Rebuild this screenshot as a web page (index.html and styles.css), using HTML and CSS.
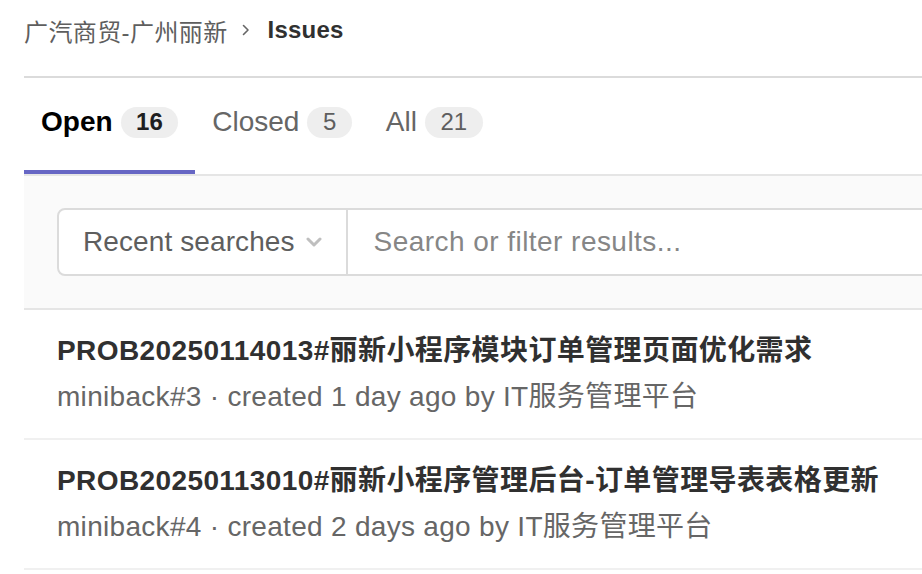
FILE: index.html
```html
<!DOCTYPE html>
<html lang="zh-CN">
<head>
<meta charset="utf-8">
<link rel="stylesheet" href="styles.css">
</head>
<body>
<div class="page">
  <nav class="breadcrumb">
    <span class="crumb">广汽商贸-广州丽新</span>
    <svg class="crumb-sep" width="8" height="12" viewBox="0 0 8 12"><path d="M1.5 1.5 L6 6 L1.5 10.5" fill="none" stroke="#666" stroke-width="1.6" stroke-linecap="round" stroke-linejoin="round"/></svg>
    <span class="crumb-current">Issues</span>
  </nav>
  <div class="tabs">
    <div class="tab active"><span class="tab-label">Open</span><span class="badge">16</span></div>
    <div class="tab"><span class="tab-label">Closed</span><span class="badge">5</span></div>
    <div class="tab"><span class="tab-label">All</span><span class="badge">21</span></div>
  </div>
  <div class="filter-bar">
    <div class="search-box">
      <div class="recent">
        <span>Recent searches</span>
        <svg class="chev" width="16" height="10" viewBox="0 0 16 10"><path d="M2 2 L8 8 L14 2" fill="none" stroke="#bfbfbf" stroke-width="3" stroke-linecap="round" stroke-linejoin="round"/></svg>
      </div>
      <div class="search-input">Search or filter results...</div>
    </div>
  </div>
  <ul class="issues">
    <li class="issue">
      <div class="issue-title">PROB20250114013#丽新小程序模块订单管理页面优化需求</div>
      <div class="issue-meta">miniback#3 · created 1 day ago by IT服务管理平台</div>
    </li>
    <li class="issue">
      <div class="issue-title">PROB20250113010#丽新小程序管理后台-订单管理导表表格更新</div>
      <div class="issue-meta">miniback#4 · created 2 days ago by IT服务管理平台</div>
    </li>
  </ul>
</div>
</body>
</html>
```

FILE: styles.css
```css
html, body {
  margin: 0;
  padding: 0;
  background: #ffffff;
  overflow: hidden;
}
body {
  font-family: "Liberation Sans", "Noto Sans CJK SC", sans-serif;
  color: #303030;
  letter-spacing: 0.3px;
}
.page {
  padding-left: 24px;
}
.breadcrumb {
  display: flex;
  align-items: center;
  box-sizing: content-box;
  height: 60px;
  padding-bottom: 16px;
  border-bottom: 2px solid #dbdbdb;
  font-size: 24px;
}
.crumb {
  color: #5e5e5e;
  letter-spacing: 0.4px;
}
.crumb-sep {
  margin: 0 18px 0 14px;
}
.crumb-current {
  font-weight: bold;
  color: #303030;
  letter-spacing: 0.2px;
}
.tabs {
  display: flex;
  border-bottom: 2px solid #e5e5e5;
}
.tab {
  display: flex;
  align-items: center;
  gap: 8px;
  height: 96px;
  padding: 0 17px 8px;
  box-sizing: border-box;
  font-size: 28px;
  color: #666666;
  letter-spacing: 0;
}
.tab.active {
  color: #000000;
  font-weight: bold;
  box-shadow: inset 0 -4px 0 #6666c4;
}
.badge {
  display: inline-flex;
  align-items: center;
  justify-content: center;
  height: 31px;
  padding: 0 15.5px;
  border-radius: 16px;
  background: #eeeeee;
  font-size: 24px;
  color: #5e5e5e;
  font-weight: normal;
}
.tab.active .badge {
  color: #1f1f1f;
  font-weight: bold;
}
.filter-bar {
  background: #fafafa;
  padding: 32px 0 32px 33px;
  border-bottom: 2px solid #e5e5e5;
}
.search-box {
  display: flex;
  height: 64px;
  background: #ffffff;
  border: 2px solid #dbdbdb;
  border-radius: 8px;
  margin-right: -40px;
}
.recent {
  display: flex;
  align-items: center;
  gap: 11px;
  padding: 0 24px;
  border-right: 2px solid #dbdbdb;
  font-size: 28px;
  color: #5e5e5e;
  letter-spacing: 0.1px;
}
.search-input {
  flex: 1;
  display: flex;
  align-items: center;
  padding-left: 26px;
  font-size: 28px;
  color: #868686;
  letter-spacing: 0.45px;
}
.issues {
  list-style: none;
  margin: 0;
  padding: 0;
}
.issue {
  padding: 21px 0 21px 33px;
  border-bottom: 2px solid #f0f0f0;
}
.issue-title {
  font-size: 28px;
  line-height: 40px;
  font-weight: bold;
  color: #303030;
  white-space: nowrap;
  letter-spacing: 0.4px;
}
.issue-meta {
  margin-top: 6px;
  font-size: 28px;
  line-height: 40px;
  color: #666666;
  white-space: nowrap;
}
```
